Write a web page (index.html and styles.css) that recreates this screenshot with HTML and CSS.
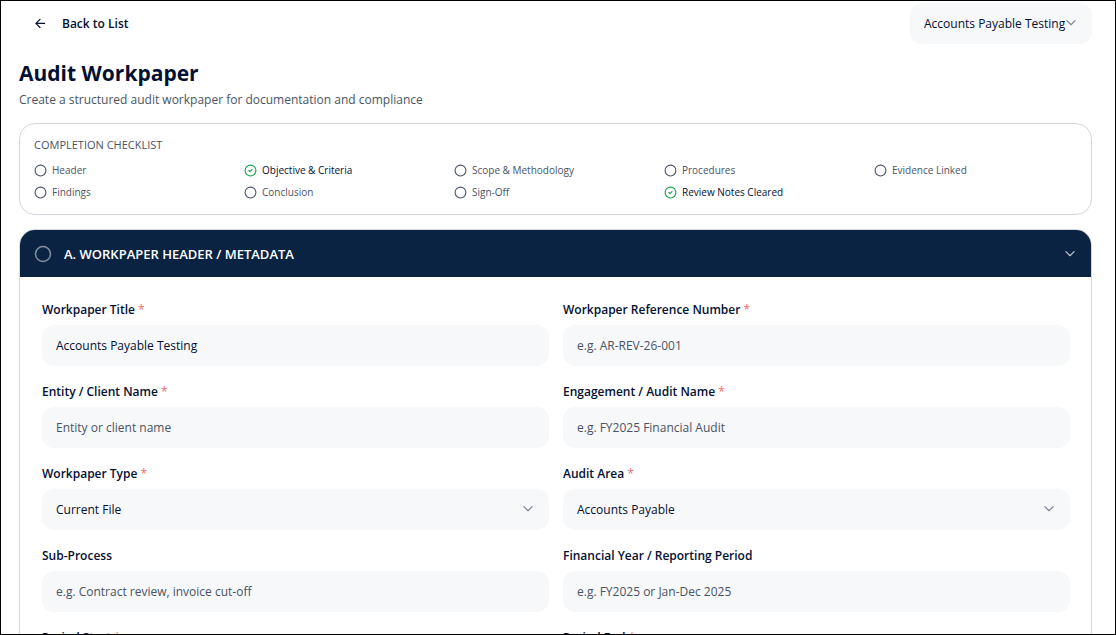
FILE: index.html
```
<!DOCTYPE html>
<html lang="en">
<head>
  <meta charset="UTF-8">
  <meta name="viewport" content="width=device-width, initial-scale=1.0">
  <title>Audit Workpaper</title>
  <link rel="stylesheet" href="styles.css">
</head>
<body>

  <!-- shared icons -->
  <svg class="sprite" aria-hidden="true">
    <symbol id="chevron" viewBox="0 0 24 24"><path d="m5 8 7 7 7-7"/></symbol>
    <symbol id="arrow-left" viewBox="0 0 24 24"><path d="m12 18-7-7 7-7M20 11H5"/></symbol>
    <symbol id="circle" viewBox="0 0 24 24"><circle cx="12" cy="12" r="10"/></symbol>
    <symbol id="circle-check" viewBox="0 0 24 24"><circle cx="12" cy="12" r="10"/><path d="m9 12 2 2 4-4"/></symbol>
  </svg>

  <main class="page">
    <div class="topbar">
      <button type="button" class="back-btn">
        <svg class="icon"><use href="#arrow-left"/></svg>
        Back to List
      </button>
      <div class="select-wrap">
        <select class="control" aria-label="Workpaper">
          <option>Accounts Payable Testing</option>
        </select>
        <svg class="icon chevron"><use href="#chevron"/></svg>
      </div>
    </div>

    <header class="page-header">
      <h1>Audit Workpaper</h1>
      <p>Create a structured audit workpaper for documentation and compliance</p>
    </header>

    <section class="checklist">
      <h2>COMPLETION CHECKLIST</h2>
      <ul>
        <li><svg class="icon"><use href="#circle"/></svg>Header</li>
        <li class="done"><svg class="icon"><use href="#circle-check"/></svg>Objective &amp; Criteria</li>
        <li><svg class="icon"><use href="#circle"/></svg>Scope &amp; Methodology</li>
        <li><svg class="icon"><use href="#circle"/></svg>Procedures</li>
        <li><svg class="icon"><use href="#circle"/></svg>Evidence Linked</li>
        <li><svg class="icon"><use href="#circle"/></svg>Findings</li>
        <li><svg class="icon"><use href="#circle"/></svg>Conclusion</li>
        <li><svg class="icon"><use href="#circle"/></svg>Sign-Off</li>
        <li class="done"><svg class="icon"><use href="#circle-check"/></svg>Review Notes Cleared</li>
      </ul>
    </section>

    <section class="panel">
      <button type="button" class="panel-header" aria-expanded="true">
        <svg class="icon status"><use href="#circle"/></svg>
        <span>A. WORKPAPER HEADER / METADATA</span>
        <svg class="icon toggle"><use href="#chevron"/></svg>
      </button>

      <form class="panel-body">
        <div class="field">
          <label for="title">Workpaper Title <span class="req">*</span></label>
          <input class="control" type="text" id="title" value="Accounts Payable Testing">
        </div>
        <div class="field">
          <label for="reference">Workpaper Reference Number <span class="req">*</span></label>
          <input class="control" type="text" id="reference" placeholder="e.g. AR-REV-26-001">
        </div>
        <div class="field">
          <label for="entity">Entity / Client Name <span class="req">*</span></label>
          <input class="control" type="text" id="entity" placeholder="Entity or client name">
        </div>
        <div class="field">
          <label for="engagement">Engagement / Audit Name <span class="req">*</span></label>
          <input class="control" type="text" id="engagement" placeholder="e.g. FY2025 Financial Audit">
        </div>
        <div class="field">
          <label for="type">Workpaper Type <span class="req">*</span></label>
          <div class="select-wrap">
            <select class="control" id="type">
              <option>Current File</option>
            </select>
            <svg class="icon chevron"><use href="#chevron"/></svg>
          </div>
        </div>
        <div class="field">
          <label for="area">Audit Area <span class="req">*</span></label>
          <div class="select-wrap">
            <select class="control" id="area">
              <option>Accounts Payable</option>
            </select>
            <svg class="icon chevron"><use href="#chevron"/></svg>
          </div>
        </div>
        <div class="field">
          <label for="subprocess">Sub-Process</label>
          <input class="control" type="text" id="subprocess" placeholder="e.g. Contract review, invoice cut-off">
        </div>
        <div class="field">
          <label for="year">Financial Year / Reporting Period</label>
          <input class="control" type="text" id="year" placeholder="e.g. FY2025 or Jan-Dec 2025">
        </div>
        <div class="field">
          <label for="start">Period Start <span class="req">*</span></label>
          <input class="control" type="text" id="start">
        </div>
        <div class="field">
          <label for="end">Period End <span class="req">*</span></label>
          <input class="control" type="text" id="end">
        </div>
      </form>
    </section>
  </main>

</body>
</html>
```
FILE: styles.css
```
* {
  box-sizing: border-box;
}

body {
  margin: 0;
  height: 100vh;
  overflow: hidden;
  border: 1px solid #000;
  background-color: #fff;
  color: #030f33;
  font-family: "Segoe UI", "Open Sans", sans-serif;
  font-size: 12px;
  line-height: 20px;
}

h1, h2, p, ul {
  margin: 0;
  padding: 0;
}

button, input, select {
  font: inherit;
  color: inherit;
}

.sprite {
  display: none;
}

.icon {
  width: 14px;
  height: 14px;
  flex-shrink: 0;
  fill: none;
  stroke: currentColor;
  stroke-width: 2;
  stroke-linecap: round;
  stroke-linejoin: round;
}

.page {
  padding: 2px 23px 0 18px;
}

.topbar {
  display: flex;
  justify-content: space-between;
  align-items: center;
}

.back-btn {
  display: flex;
  align-items: center;
  gap: 15px;
  padding: 8px 14px;
  border: none;
  background: none;
  font-weight: 600;
  cursor: pointer;
}

.control {
  display: block;
  width: 100%;
  height: 41px;
  padding: 0 14px;
  border: none;
  border-radius: 12px;
  background-color: #f7f8fa;
}

.control::placeholder {
  color: #4a5365;
  opacity: 1;
}

.select-wrap {
  position: relative;
}

.select-wrap .control {
  appearance: none;
  padding-right: 26px;
}

.chevron {
  position: absolute;
  top: 13px;
  right: 14px;
  color: #7c8296;
  pointer-events: none;
}

.page-header {
  padding: 14px 0 13px;
}

.page-header h1 {
  font-size: 21px;
  line-height: 30px;
  font-weight: 700;
}

.page-header p {
  margin-top: 2px;
  color: #4a5365;
}

.checklist {
  padding: 12px 14px 13px;
  border: 1px solid #d5d6de;
  border-radius: 16px;
}

.checklist h2 {
  margin-bottom: 7px;
  color: #4a5365;
  font-size: 11px;
  line-height: 18px;
  font-weight: 500;
}

.checklist ul {
  display: grid;
  grid-template-columns: repeat(5, 1fr);
  gap: 4px 7px;
  list-style: none;
}

.checklist li {
  display: flex;
  align-items: center;
  gap: 5px;
  color: #4a5365;
  font-size: 10px;
  line-height: 18px;
}

.checklist .icon {
  width: 13px;
  height: 13px;
}

.checklist .done {
  color: #030f33;
}

.checklist .done .icon {
  color: #16a34a;
}

.panel {
  margin-top: 14px;
  border: 1px solid #d5d6de;
  border-radius: 16px;
  overflow: hidden;
}

.panel-header {
  display: flex;
  align-items: center;
  gap: 12px;
  width: 100%;
  padding: 14px 14px 13px;
  border: none;
  background-color: #0a2342;
  color: #fff;
  font-size: 13px;
  font-weight: 600;
  text-align: left;
  cursor: pointer;
}

.panel-header .status {
  width: 18px;
  height: 18px;
  color: #8490a0;
}

.panel-header .toggle {
  margin-left: auto;
  color: #c2c8d0;
}

.panel-body {
  display: grid;
  grid-template-columns: 1fr 1fr;
  gap: 16px 14px;
  padding: 23px 21px 22px 22px;
}

.field label {
  display: block;
  margin-bottom: 5px;
  font-weight: 600;
}

.req {
  color: #f26b6b;
  font-weight: 400;
}
```
